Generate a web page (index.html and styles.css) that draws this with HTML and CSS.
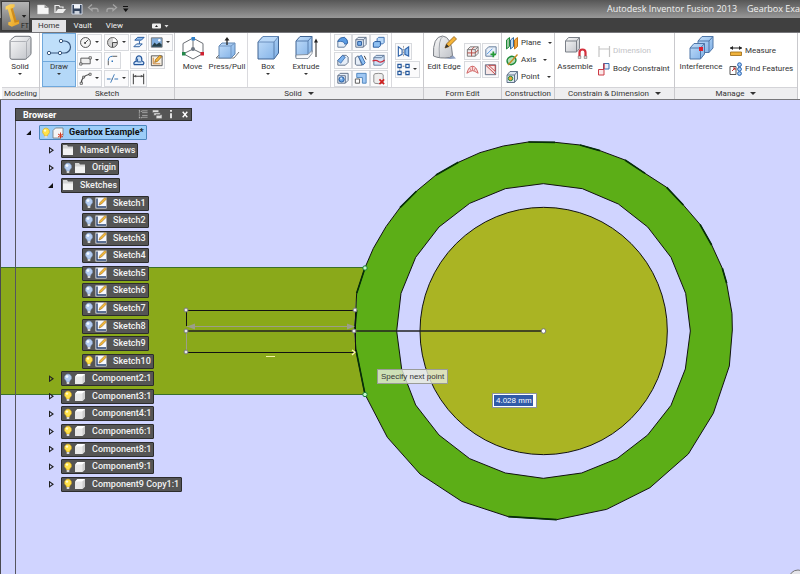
FILE: index.html
```html
<!DOCTYPE html>
<html lang="en">
<head>
<meta charset="utf-8">
<title>Autodesk Inventor Fusion 2013</title>
<link rel="stylesheet" href="styles.css">
</head>
<body>
<svg class="defs" aria-hidden="true">
  <defs>
    <linearGradient id="gBlue" x1="0" y1="0" x2="1" y2="1"><stop offset="0" stop-color="#c3defa"/><stop offset="1" stop-color="#7fb0e6"/></linearGradient>
    <linearGradient id="gGrey" x1="0" y1="0" x2="1" y2="1"><stop offset="0" stop-color="#fafafa"/><stop offset="1" stop-color="#bfc2c8"/></linearGradient>
    <linearGradient id="gGold" x1="0" y1="0" x2="1" y2="1"><stop offset="0" stop-color="#ffd964"/><stop offset="1" stop-color="#e8a020"/></linearGradient>
  </defs>
  <symbol id="bulb-on" viewBox="0 0 10 12"><path d="M5 1a3.600 3.600 0 0 0-2 6.500L3.600 9h2.800L7 7.500A3.600 3.600 0 0 0 5 1z" fill="#ffe24a" stroke="#d8a820" stroke-width=".6"/><circle cx="4" cy="3.600" r="1.200" fill="#fffbd0"/><path d="M3.700 9h2.600v2H3.700z" fill="#d9d9d9"/></symbol>
  <symbol id="bulb-off" viewBox="0 0 10 12"><path d="M5 1a3.600 3.600 0 0 0-2 6.500L3.600 9h2.800L7 7.500A3.600 3.600 0 0 0 5 1z" fill="#b5cdf2" stroke="#8aa5cf" stroke-width=".6"/><circle cx="4" cy="3.600" r="1.400" fill="#f4f9ff"/><path d="M3.700 9h2.600v2H3.700z" fill="#d9d9d9"/></symbol>
  <symbol id="folder" viewBox="0 0 12 12"><path d="M1 1h4l1 1.500h5V11H1z" fill="#d4d4d4"/><path d="M1 4.500h10V11H1z" fill="#f2f2f2"/></symbol>
  <symbol id="body" viewBox="0 0 12 12"><path d="M1 3.500 3.500 1H11v7.500L8.500 11H1z" fill="#e9e9e9"/><path d="M1 3.500 3.500 1H11L8.500 3.500z" fill="#fff"/><path d="M8.500 3.500 11 1v7.500L8.500 11z" fill="#cfcfcf"/></symbol>
  <symbol id="sk" viewBox="0 0 12 12"><path d="M.5 .5h11v11H.5z" fill="#f7f9ff"/><path d="M2 1.500V10h9" fill="none" stroke="#27406e" stroke-width="1.400"/><path d="m4 8 1-2.500L10 .5 11.500 2 6.500 7z" fill="#f5b93a" stroke="#7d5510" stroke-width=".5"/></symbol>
</svg>

<header class="titlebar">
  <button class="app" aria-label="Application menu">
    <svg viewBox="0 0 30 30"><path d="M4 4.500 9 2h5v3l-2 1 4 14 3-.5v4L11 27l-4-2v-3l3-1L6.500 7.500 4 8z" fill="url(#gGold)"/><path d="M9.500 7 12 6l4 14 3-.5v1.500l-5 1.500z" fill="#b56c08" opacity=".6"/><path d="M22 14h5l-2.500 3z" fill="#222"/></svg>
    <span>FT</span>
  </button>
  <nav class="quick" aria-label="Quick access">
    <button aria-label="New"><svg viewBox="0 0 14 12"><path d="M1.500 2h7L12.500 5v6h-11z" fill="#f6f6f6" stroke="#ccc" stroke-width=".5"/><path d="M8.500 2v3h4z" fill="#999"/></svg></button>
    <button aria-label="Open"><svg viewBox="0 0 14 12"><path d="M2 10V2.500h4l1 1.500h3v1.500" fill="none" stroke="#eee" stroke-width="1.200"/><path d="M2 10 5 6h8l-3 4z" fill="#eee"/></svg></button>
    <button aria-label="Save"><svg viewBox="0 0 14 12"><path d="M2 1.500h10V11H2z" fill="#33435c" stroke="#cfd6e3"/><path d="M4 1.500h6v4H4z" fill="#f2f4f8"/><path d="M4.500 8h5v3h-5z" fill="#cdd3dd"/></svg></button>
    <button aria-label="Undo"><svg viewBox="0 0 14 12"><path d="M5 1.500 1.500 4.500 5 7.500V5.500h4q2 0 2 2V9" fill="none" stroke="#a5a5a5" stroke-width="1.300"/></svg></button>
    <button aria-label="Redo"><svg viewBox="0 0 14 12"><path d="m9 1.500 3.500 3L9 7.500V5.500H5q-2 0-2 2V9" fill="none" stroke="#a5a5a5" stroke-width="1.300"/></svg></button>
    <button aria-label="Customize"><svg viewBox="0 0 14 12"><path d="M2 3h5v1H2zM2 5.500h5.500L4.750 9z" fill="#111"/></svg></button>
  </nav>
  <h1><span>Autodesk Inventor Fusion 2013</span><span>Gearbox Exa</span></h1>
</header>

<nav class="tabs" aria-label="Ribbon tabs">
  <button class="current">Home</button>
  <button>Vault</button>
  <button>View</button>
  <button class="min" aria-label="Ribbon display"><svg viewBox="0 0 18 8"><rect x="1" y="1.500" width="9" height="5" rx="1" fill="#eee"/><path d="M4 5h3L5.500 3z" fill="#222"/><path d="M13.500 3h4l-2 2.500z" fill="#ddd"/></svg></button>
</nav>

<section class="ribbon">
  <section class="panel">
    <div class="tools">
      <button class="big w-solid"><svg viewBox="0 0 28 28"><path d="M4 7.500Q4 6 5 5.500L8 3q1-.7 2-.7h13q2 0 2 2v15q0 1-1 2l-3 3q-1 1-2 1H6q-2 0-2-2z" fill="url(#gGrey)" stroke="#70747b"/><path d="M4.500 7.500h15q1 0 1 1v15.500M20.500 8 24 3.500" fill="none" stroke="#a2a5ab" stroke-width=".8"/></svg>Solid<i class="caret"></i></button>
    </div>
    <h2>Modeling</h2>
  </section>

  <section class="panel">
    <div class="tools sketch">
      <button class="big on"><svg viewBox="0 0 28 28"><path d="M4 19h10M17 7h2.500a6 6 0 0 1 0 12H16" fill="none" stroke="#39577c" stroke-width="1.200"/><g fill="#fff" stroke="#39577c"><circle cx="4" cy="19" r="1.700"/><circle cx="15" cy="19" r="1.700"/><circle cx="16" cy="7" r="1.700"/></g></svg>Draw<i class="caret"></i></button>
      <div class="sketch-grid">
        <button class="t dd"><svg viewBox="0 0 16 16"><circle cx="8" cy="8" r="5.300" fill="#f4f4f4" stroke="#4a4a4a"/><path d="m7.500 8.500 3.500-3.500" stroke="#4a4a4a"/><circle cx="7.500" cy="8.500" r="1" fill="#333"/></svg><i class="caret"></i></button>
        <button class="t dd"><svg viewBox="0 0 16 16"><circle cx="8" cy="8" r="5.300" fill="#d4d4d4" stroke="#555"/><path d="M8 8h5M8 8v5" stroke="#444"/><path d="M8.500 3.500a4.500 4.500 0 0 1 4 4h-4z" fill="#fff"/></svg><i class="caret"></i></button>
        <button class="t"><svg viewBox="0 0 16 16"><path d="m4 5.500 3-3h7l-3 3z" fill="#8ebdf0" stroke="#23569b"/><path d="M9 6.500v3M3 12.500l3-3h6l-3 3z" fill="#dcebfb" stroke="#23569b"/></svg></button>
        <button class="t dd"><svg viewBox="0 0 16 16"><path d="M2.500 3h11.500v10H2.500z" fill="#82aede" stroke="#777"/><path d="m3 12 3-4 2 2 3-2 2.500 2v2.500H3z" fill="#253f48"/><circle cx="11" cy="5.500" r="1.300" fill="#fff"/></svg><i class="caret"></i></button>
        <button class="t dd"><svg viewBox="0 0 16 16"><path d="M3 5.500h10v6H3z" fill="#eee" stroke="#555"/><path d="M1.800 10.500h2.400v2.400H1.800zM11.800 4h2.400v2.400h-2.400z" fill="#fff" stroke="#444" stroke-width=".8"/></svg><i class="caret"></i></button>
        <button class="t"><svg viewBox="0 0 16 16"><path d="M3.500 13V8" stroke="#555"/><path d="M3.500 8q0-4.500 4.500-4.500" fill="none" stroke="#2870b9"/><path d="M8 3.500h5" stroke="#555"/><path d="M7 8h1.500v1.500H7z" fill="#2870b9"/></svg></button>
        <button class="t"><svg viewBox="0 0 16 16"><path d="M3.500 12.500q-1.500-3 2-3.500Q5 3 8.500 3t3 5.500q3.500 1 1.500 4z" fill="#cfe3f9" stroke="#23569b" stroke-width="1.300"/><path d="M7 6v3.500h4" fill="none" stroke="#23569b"/></svg></button>
        <button class="t"><svg viewBox="0 0 16 16"><path d="M2.500 3h11.500v10.500H2.500z" fill="#f4efe4" stroke="#555"/><path d="M4.500 5v6.500H12" stroke="#cc8030" fill="none"/><path d="m6 10 1-3 4.500-4.500L13.500 4 9 9z" fill="#f4b63f" stroke="#875510" stroke-width=".7"/></svg></button>
        <button class="t dd"><svg viewBox="0 0 16 16"><path d="M3.500 13Q4 5 12.500 3.500" fill="none" stroke="#444" stroke-width="1.200"/><path d="M2.300 12h2.400v2.200H2.300zM11.800 2.400H14v2.200h-2.200zM5 5.500h2v2H5z" fill="#fff" stroke="#444" stroke-width=".8"/></svg><i class="caret"></i></button>
        <button class="t dd"><svg viewBox="0 0 16 16"><path d="M2 8.500h4M10 8.500h4" stroke="#3776b8" stroke-width="1.200"/><path d="m6 12.500 4-9" stroke="#3776b8"/><path d="M7 8.500h1.500" stroke="#777"/></svg><i class="caret"></i></button>
        <button class="t"><svg viewBox="0 0 16 16"><path d="M2.500 3v11M13.500 3v11M3 5.500h10" stroke="#444" stroke-width="1.100"/><path d="m3 5.500 2.500-1.500v3zM13 5.500l-2.500-1.500v3z" fill="#555"/></svg></button>
      </div>
    </div>
    <h2>Sketch</h2>
  </section>

  <section class="panel">
    <div class="tools">
      <button class="big w-move"><svg viewBox="0 0 28 28"><path d="M14 4 24 9.500v10L14 25 4 19.500v-10zM14 4v11L4 20M14 15l10 5" fill="none" stroke="#6a6e74"/><circle cx="14" cy="15" r="2" fill="#6c7682"/><path d="M12.500 3h3.500v3.500h-3.500z" fill="#2f80ca"/><path d="M3 18h3.500v3.500H3z" fill="#23874a"/><path d="M21.500 18H25v3.500h-3.500z" fill="#cf2030"/></svg>Move</button>
      <button class="big w-press"><svg viewBox="0 0 28 28"><path d="m3 24 3-3M3 24h18l5-6" stroke="#777" fill="none"/><path d="m6 12 3-3h13v11l-4 4H6z" fill="url(#gBlue)" stroke="#6388b4"/><path d="M6 12h12v12M18 12l4-3" fill="none" stroke="#7297c4"/><path d="M14 11V5" stroke="#222" stroke-width="1.300"/><path d="M11.500 6.500 14 3l2.500 3.500z" fill="#222"/></svg>Press/Pull</button>
      <hr>
      <button class="big w-box"><svg viewBox="0 0 28 28"><path d="m4 8 5-5.500h15.500V19L20 25H4z" fill="url(#gBlue)" stroke="#3f6391"/><path d="m4 8 5-5.500h15.500L20 8z" fill="#b9d8f8" stroke="#587eae" stroke-width=".8"/><path d="M20 8v17" stroke="#587eae"/></svg>Box<i class="caret"></i></button>
      <button class="big w-ext"><svg viewBox="0 0 28 28"><path d="m4 7 4-4.500h12V18l-4 5.500H4z" fill="url(#gBlue)" stroke="#3f6391"/><path d="M4 7h12v16M16 7l4-4.500" fill="none" stroke="#587eae"/><path d="m4 21 12-.5 4-4v3l-4 5H4z" fill="#f5f7fa" stroke="#77818e" stroke-width=".8"/><path d="M24 23V7" stroke="#222"/><path d="m22 8.500 2-4 2 4z" fill="#222"/></svg>Extrude<i class="caret"></i></button>
      <hr>
      <div class="grid3">
        <button class="t"><svg viewBox="0 0 16 16"><path d="M3 13V6q2-3.500 7-3.500 3.500 2 3.500 6L10 13z" fill="#e6eef8" stroke="#5f7898"/><path d="M3 7q2-4.500 7-4.500 3.500 2 3.500 6l-3 1.500Q10 6 3 7z" fill="#5a9be2" stroke="#23569b" stroke-width=".7"/></svg></button>
        <button class="t"><svg viewBox="0 0 16 16"><path d="m3 5 2.500-2.500h8.500V10l-3 3H3zM3 5h8v8M11 5l3-2.500" fill="#e6eef8" stroke="#5f6f86"/><path d="M5 7h4v4H5z" fill="#7bb2ee" stroke="#23569b"/></svg></button>
        <button class="t"><svg viewBox="0 0 16 16"><path d="M6.500 4 8 2.500h6V8l-1.500 1.500h-6z" fill="#b8d8f8" stroke="#3d6fb0"/><path d="M2.500 8.500 4 7h6v4.500L8.500 13h-6z" fill="#8fc0f2" stroke="#23569b"/></svg></button>
        <button class="t"><svg viewBox="0 0 16 16"><path d="M3 13V8l5-5.500h4l2 2V10l-3 3z" fill="#e6eef8" stroke="#5f6f86"/><path d="m3 8 5-5.500 3 2L6 11z" fill="#7db3ee" stroke="#23569b" stroke-width=".7"/></svg></button>
        <button class="t"><svg viewBox="0 0 16 16"><path d="M2.500 12V5l3-2 4 10H4z" fill="#e6eef8" stroke="#5f6f86"/><path d="m6 4 3-1.500 4 8L10.500 13z" fill="#8fc0f2" stroke="#3d6fb0"/><path d="m12 3 2 4" stroke="#333"/></svg></button>
        <button class="t"><svg viewBox="0 0 16 16"><path d="m3 5 2.500-2.500h8.500V10l-3 3H3zM3 5h8M11 5l3-2.500" fill="#cfe2f7" stroke="#5f7898"/><path d="M1.500 8.500q4-1.500 6.500.5t6.500-1.500" fill="none" stroke="#d02a3a" stroke-width="1.300"/></svg></button>
        <button class="t"><svg viewBox="0 0 16 16"><path d="m3 5 2.500-2.500h8.500V10l-3 3H3zM3 5h8v8" fill="#e6eef8" stroke="#5f6f86"/><circle cx="7" cy="9" r="2.800" fill="#6aa6e6" stroke="#23569b"/><circle cx="6.500" cy="8" r="1" fill="#d8eafd"/></svg></button>
        <button class="t"><svg viewBox="0 0 16 16"><path d="M4 2.500h10V13h-4V7H4z" fill="#9fc7f3" stroke="#4d84bd"/><path d="M2.500 8.500H7V13H2.500z" fill="#fff" stroke="#555"/></svg></button>
        <button class="t"><svg viewBox="0 0 16 16"><path d="M3 4q0-1.500 5-1.500T13 4v8q0 1.500-5 1.500T3 12z" fill="#eee" stroke="#888"/><path d="m9 9 5 5M14 9l-5 5" stroke="#d02020" stroke-width="1.800"/></svg></button>
      </div>
      <hr>
      <div class="stack">
        <button class="t"><svg viewBox="0 0 16 16"><path d="M2.500 3v10l4-2V6z" fill="#fff" stroke="#2f62a8" stroke-width="1.200"/><path d="M13.500 3v10l-4-2V6z" fill="#8fbdf0" stroke="#2f62a8" stroke-width="1.200"/><path d="M8 2v12" stroke="#999" stroke-dasharray="2 1"/></svg></button>
        <button class="t dd"><svg viewBox="0 0 16 16"><path d="M4 4.500h8M4 11.500h8M4 5v6" stroke="#777" stroke-dasharray="2 1"/><path d="M2 2.500h3.500V6H2zM2 10h3.500v3.500H2zM10.500 10H14v3.500h-3.500zM10.500 2.500H14V6h-3.500z" fill="#eaf3fd" stroke="#23569b" stroke-width="1.200"/></svg><i class="caret"></i></button>
      </div>
    </div>
    <h2>Solid<i class="caret wide"></i></h2>
  </section>

  <section class="panel">
    <div class="tools">
      <button class="big w-edge"><svg viewBox="0 0 28 28"><path d="M8 23 20 25l6-.5-4-4z" fill="#5f78a8" opacity=".7"/><path d="M3.500 22Q2.500 2.500 12.500 2q9 .5 10 19.500l-3 2Q10 25 3.500 22z" fill="url(#gGrey)" stroke="#7b7f86"/><path d="M9.500 23Q8 5 13 2.500" fill="none" stroke="#a2a6ac"/><path d="m15 14 1.500-4L24 2.500l2.500 2.500L19 12.500z" fill="#f5b438" stroke="#8a5a14" stroke-width=".8"/><path d="m15 14 1.500-4 2.500 2.500z" fill="#333"/></svg>Edit Edge</button>
      <div class="grid2">
        <button class="t"><svg viewBox="0 0 16 16"><path d="m2.500 6 3-3H14v7l-3 3H2.500zM2.500 6H11v7M11 6l3-3" fill="#f0eaec" stroke="#777"/><path d="M2.500 9.500H11l3-3M7 13V6l3-3" fill="none" stroke="#b5483f"/></svg></button>
        <button class="t"><svg viewBox="0 0 16 16"><path d="M3 13V6l3-3h8v7l-3 3z" fill="#e6eef8" stroke="#5f7898"/><path d="m4 11 6-6" stroke="#5a9be2"/><path d="M11 8v6M8 11h6" stroke="#229a35" stroke-width="1.800"/></svg></button>
        <button class="t"><svg viewBox="0 0 16 16"><path d="M2 12Q4 4.500 8 4.500T14 12l-3.500-2Q8 8.500 5.500 10z" fill="#f8dada" stroke="#cf6060"/><path d="M8 4.500V9M5 6.500 6.500 9.500M11 6.500l-1.500 3" stroke="#cf6060" stroke-width=".8"/></svg></button>
        <button class="t"><svg viewBox="0 0 16 16"><path d="M2.500 3h11v10.500h-11z" fill="#f8e6e6" stroke="#5f6f86"/><path d="m3 3.500 10.500 10M6 3.500h7v6.500z" fill="none" stroke="#c24040"/></svg></button>
      </div>
    </div>
    <h2>Form Edit</h2>
  </section>

  <section class="panel">
    <div class="tools rows">
      <button class="row"><svg viewBox="0 0 14 14"><path d="m1.500 4 3-2.500v9l-3 2.500z" fill="#9bc7a0" stroke="#1f8a3a"/><path d="m5.500 4 3-2.500v9l-3 2.500z" fill="#bcd9f4" stroke="#33689e"/><path d="m9.500 4 3-2.500v9l-3 2.500z" fill="#f3a53b" stroke="#c0741a"/></svg>Plane<i class="caret"></i></button>
      <button class="row"><svg viewBox="0 0 14 14"><ellipse cx="6.500" cy="7.500" rx="4.500" ry="4" transform="rotate(-30 6.500 7.500)" fill="#b4ddb9" stroke="#1f8a3a" stroke-width="1.500"/><path d="M3 12 12.500 1.500" stroke="#c98a20" stroke-width="1.300"/></svg>Axis<i class="caret"></i></button>
      <button class="row"><svg viewBox="0 0 14 14"><path d="m2 5 3-3.500h7.500V9l-3 3.500H2zM2 5h7.500v7.500M9.500 5l3-3.500" fill="#dce6f0" stroke="#63748c"/><circle cx="5.500" cy="8.500" r="2.200" fill="#f3a53b" stroke="#1f8a3a"/></svg>Point<i class="caret"></i></button>
    </div>
    <h2>Construction</h2>
  </section>

  <section class="panel">
    <div class="tools">
      <button class="big w-asm"><svg viewBox="0 0 28 28"><path d="m4.500 7 3-3.500h11v11l-3 3.500h-11zM4.500 7h11v11M15.500 7l3-3.500" fill="url(#gGrey)" stroke="#7b8088"/><path d="M18.500 24v-5.500a3 3 0 0 1 6 0V24" fill="none" stroke="#d4303c" stroke-width="2.200"/><path d="M17.200 22h2.600v2.500h-2.600zM23.200 22h2.600v2.500h-2.600z" fill="#ddd" stroke="#666" stroke-width=".5"/></svg>Assemble</button>
      <div class="rows two">
        <button class="row off" disabled><svg viewBox="0 0 14 14"><path d="M2 2v11M12.500 2v11M2 5h10.500" stroke="#c4c4c4" stroke-width="1.200"/></svg>Dimension</button>
        <button class="row"><svg viewBox="0 0 14 14"><path d="M6.500 1.500H12V7H6.500z" fill="#e6eefb" stroke="#3d6fb0"/><path d="M1.500 7.500H7V13H1.500z" fill="#fbe8e8" stroke="#cc3a45"/><path d="M7 1.500V7" stroke="#cc2a35" stroke-width="1.300"/></svg>Body Constraint</button>
      </div>
    </div>
    <h2>Constrain &amp; Dimension<i class="caret wide"></i></h2>
  </section>

  <section class="panel">
    <div class="tools">
      <button class="big w-int"><svg viewBox="0 0 28 28"><path d="m11 7 4-4.500h11V14l-4 4.500H11zM11 7h11v11.500M22 7l4-4.500" fill="url(#gBlue)" stroke="#4f76a8"/><path d="m3 14 4-4.500h10.500V20l-4 5H3zM3 14h10.500v11M13.500 14l4-4.500" fill="url(#gBlue)" stroke="#4f76a8"/><path d="M12 13h4v4h-4z" fill="#e01f2d"/></svg>Interference</button>
      <div class="rows two">
        <button class="row"><svg viewBox="0 0 14 14"><path d="M1 4h12" stroke="#222"/><path d="M1 4l3-2v4zM13 4l-3-2v4z" fill="#222"/><path d="M1.500 8h11v3.500h-11z" fill="#efb23c" stroke="#9a6710" stroke-width=".8"/></svg>Measure</button>
        <button class="row"><svg viewBox="0 0 14 14"><path d="M1 4.500h6v8H1z" fill="#fff" stroke="#555"/><path d="m3 9 3-3M4 6h2v2" stroke="#c22d2d" fill="none"/><g fill="#a9cff7" stroke="#235fae"><circle cx="10.500" cy="2.700" r="1.900"/><circle cx="10.500" cy="7.200" r="1.900"/><circle cx="10.500" cy="11.500" r="1.900"/></g></svg>Find Features</button>
      </div>
    </div>
    <h2>Manage<i class="caret wide"></i></h2>
  </section>
</section>

<main class="canvas">
  <svg class="drawing" viewBox="0 100 800 474" preserveAspectRatio="xMinYMin slice">
    <path d="M0 268H366L356 300 354 331 356 352 365 394H0z" fill="#8aa91a"/>
    <path d="M0 267.500H366M0 394.500H365" stroke="#39702a"/>
    <g transform="translate(350 130) scale(.33333)" stroke="#111" stroke-width="3" stroke-linejoin="round">
      <path fill="#5cae17" fill-rule="evenodd" d="M535 36 615 37 690 45 750 62 825 90 885 130 950 172 1000 225 1050 283 1085 345 1117 415 1130 460 1146 550 1147 600 1138 708 1090 850 1015 972 900 1073 770 1138 620 1169 475 1160 335 1114 210 1032 112 922 45 793 18 660 14 605 20 490 45 413 70 355 108 290 150 233 200 183 258 135 325 97 390 68 460 48zM580 161 697 176 805 222 893 291 963 382 1007 490 1021 603 1006 717 963 826 893 915 801 986 695 1029 580 1045 466 1029 359 986 267 915 197 825 155 717 140 603 153 490 197 382 267 291 359 220 466 176z"/>
      <circle cx="581" cy="603" r="371" fill="#aab423"/>
      <path d="M45 413 20 490 M18 660 45 793 M20 540 14 600 M325 97 258 135 M200 183 150 233 M690 45 750 62 M825 90 885 130 M950 172 1000 225 M1050 283 1085 345 M1117 415 1130 460 M535 36 615 37 M475 1160 620 1169" fill="none" stroke="#062f08" stroke-width="5"/>
    </g>
    <path d="M186 310.500H355M186 352.500H355M186.500 310v16" stroke="#111" fill="none"/>
    <path d="M355.500 310V352" stroke="#111"/>
    <path d="M186 331H543" stroke="#222" stroke-width="1.300"/>
    <path d="M186.500 331v20M187 326.500H354" stroke="#9c9e8a"/>
    <path d="m187 326.500 8-3v6zM355 326.500l-8-3v6z" fill="#9c9e8a"/>
    <path d="M266 356.500h9" stroke="#f2f3a0"/>
    <g fill="#e9e9e9" stroke="#777"><circle cx="186" cy="310" r="2"/><circle cx="186" cy="331" r="2"/><circle cx="186" cy="352" r="2"/><circle cx="355" cy="310" r="2"/><circle cx="354" cy="331" r="2"/><circle cx="543.500" cy="331" r="2.300" fill="#fff"/></g>
    <path d="m352 350 3 2-3 3" fill="none" stroke="#fff3b0" stroke-width="1.300"/>
    <g fill="#c9f5c9" stroke="#158035"><circle cx="365" cy="268" r="2.200"/><circle cx="365" cy="394.500" r="2.200"/></g>
    <path d="M15.500 121V574" stroke="#55555f"/>
    <circle cx="798" cy="579" r="9" fill="#e5e5ea" stroke="#777"/>
  </svg>

  <section class="browser">
    <header>
      <h2>Browser</h2>
      <button aria-label="Filter"><svg viewBox="0 0 12 12"><path d="M2 1v10M2 2.500h3M2 9.500h3" stroke="#ccc" stroke-dasharray="1 1"/><path d="M5 2h6M5 4h6M5 7h6M5 9h6" stroke="#aaa"/></svg></button>
      <button aria-label="Collapse all"><svg viewBox="0 0 12 12"><path d="M1 1h7v3H1zM2.500 4h7v3h-7zM5 6h6.500v4.500H5z" fill="#ddd" stroke="#555" stroke-width=".7"/></svg></button>
      <button aria-label="Options"><svg viewBox="0 0 12 12"><path d="M5 1h2v2H5zM5 4.500h2V10H5z" fill="#eee"/></svg></button>
      <button aria-label="Close"><svg viewBox="0 0 12 12"><path d="m3.500 3 5 6M8.500 3l-5 6" stroke="#fff" stroke-width="1.500"/></svg></button>
    </header>
    <ul class="tree">
      <li class="l0"><i class="open"></i><button class="node sel"><svg><use href="#bulb-on"/></svg><svg viewBox="0 0 12 12"><path d="M1 3.500 3.500 1H11v7.500L8.500 11H1z" fill="#f5f5f5" stroke="#777" stroke-width=".8"/><path d="M8.500 5.500v6M6 7l5 3M11 7l-5 3" stroke="#d13a22"/></svg><span>Gearbox Example*</span></button></li>
      <li class="l1"><i class="shut"></i><button class="node"><svg><use href="#folder"/></svg><span>Named Views</span></button></li>
      <li class="l1"><i class="shut"></i><button class="node"><svg><use href="#bulb-off"/></svg><svg><use href="#folder"/></svg><span>Origin</span></button></li>
      <li class="l1"><i class="open"></i><button class="node"><svg><use href="#folder"/></svg><span>Sketches</span></button></li>
      <li class="l2"><button class="node"><svg><use href="#bulb-off"/></svg><svg><use href="#sk"/></svg><span>Sketch1</span></button></li>
      <li class="l2"><button class="node"><svg><use href="#bulb-off"/></svg><svg><use href="#sk"/></svg><span>Sketch2</span></button></li>
      <li class="l2"><button class="node"><svg><use href="#bulb-off"/></svg><svg><use href="#sk"/></svg><span>Sketch3</span></button></li>
      <li class="l2"><button class="node"><svg><use href="#bulb-off"/></svg><svg><use href="#sk"/></svg><span>Sketch4</span></button></li>
      <li class="l2"><button class="node"><svg><use href="#bulb-off"/></svg><svg><use href="#sk"/></svg><span>Sketch5</span></button></li>
      <li class="l2"><button class="node"><svg><use href="#bulb-off"/></svg><svg><use href="#sk"/></svg><span>Sketch6</span></button></li>
      <li class="l2"><button class="node"><svg><use href="#bulb-off"/></svg><svg><use href="#sk"/></svg><span>Sketch7</span></button></li>
      <li class="l2"><button class="node"><svg><use href="#bulb-off"/></svg><svg><use href="#sk"/></svg><span>Sketch8</span></button></li>
      <li class="l2"><button class="node"><svg><use href="#bulb-off"/></svg><svg><use href="#sk"/></svg><span>Sketch9</span></button></li>
      <li class="l2"><button class="node"><svg><use href="#bulb-on"/></svg><svg><use href="#sk"/></svg><span>Sketch10</span></button></li>
      <li class="l1"><i class="shut"></i><button class="node"><svg><use href="#bulb-off"/></svg><svg><use href="#body"/></svg><span>Component2:1</span></button></li>
      <li class="l1"><i class="shut"></i><button class="node"><svg><use href="#bulb-on"/></svg><svg><use href="#body"/></svg><span>Component3:1</span></button></li>
      <li class="l1"><i class="shut"></i><button class="node"><svg><use href="#bulb-on"/></svg><svg><use href="#body"/></svg><span>Component4:1</span></button></li>
      <li class="l1"><i class="shut"></i><button class="node"><svg><use href="#bulb-on"/></svg><svg><use href="#body"/></svg><span>Component6:1</span></button></li>
      <li class="l1"><i class="shut"></i><button class="node"><svg><use href="#bulb-on"/></svg><svg><use href="#body"/></svg><span>Component8:1</span></button></li>
      <li class="l1"><i class="shut"></i><button class="node"><svg><use href="#bulb-on"/></svg><svg><use href="#body"/></svg><span>Component9:1</span></button></li>
      <li class="l1"><i class="shut"></i><button class="node"><svg><use href="#bulb-on"/></svg><svg><use href="#body"/></svg><span>Component9 Copy1:1</span></button></li>
    </ul>
  </section>

  <label class="hint" for="length">Specify next point</label>
  <input class="length" id="length" type="text" value="4.028 mm">
</main>
</body>
</html>
```

FILE: styles.css
```css
* { box-sizing: border-box; }

body {
  margin: 0;
  min-height: 100vh;
  display: flex;
  flex-direction: column;
  overflow: hidden;
  background: #d0d4ff;
  font-family: Roboto, "Liberation Sans", sans-serif;
  font-size: 8px;
  line-height: 10px;
  color: #333;
}

button {
  margin: 0;
  padding: 0;
  border: 0;
  background: none;
  font: inherit;
  color: inherit;
}

svg { display: block; }
.defs { position: absolute; width: 0; height: 0; }
h1, h2 { margin: 0; font-weight: 400; }

/* Title bar */
.titlebar {
  position: relative;
  display: flex;
  align-items: center;
  height: 18px;
  padding-left: 36px;
  background: linear-gradient(#565656, #989898);
}

.app {
  position: absolute;
  left: 1px;
  top: 1px;
  z-index: 1;
  width: 29px;
  height: 30px;
  border: 1px solid #3a3a3a;
  background: linear-gradient(#b4b4b4, #6c6c6c);
}
.app svg { width: 27px; height: 28px; }
.app span { position: absolute; right: 0; bottom: -1px; font-size: 7px; color: #222; }

.quick { display: flex; gap: 3px; }
.quick svg { width: 14px; height: 12px; }

.titlebar h1 {
  display: flex;
  justify-content: flex-end;
  gap: 10px;
  margin-left: auto;
  white-space: nowrap;
  font: 9px/16px "Open Sans", sans-serif;
  color: #f2f2f2;
}

/* Tabs */
.tabs {
  display: flex;
  height: 14px;
  padding: 2px 0 0 32px;
  gap: 2px;
  background: #404040;
}
.tabs button { padding: 0 6px; line-height: 12px; color: #f0f0f0; }
.tabs .current { background: #e3e3e5; color: #333; }
.tabs .min svg { width: 18px; height: 8px; margin-left: 14px; }

/* Ribbon */
.ribbon {
  display: grid;
  grid-template-columns: 38px 135px 249px 78px 53px 120px 1fr;
  height: 68px;
  padding: 0 2px;
  border-top: 1px solid #77777b;
  border-bottom: 1px solid #77777b;
  background: #fff;
}
.panel {
  display: flex;
  flex-direction: column;
  border-right: 1px solid #c9c9cd;
  white-space: nowrap;
}
.panel h2 {
  display: flex;
  align-items: center;
  justify-content: center;
  height: 12px;
  border-top: 1px solid #d4d4d8;
  background: #eeeef0;
  font-size: 8px;
}
.tools { display: flex; flex: 1; align-items: center; }

.caret {
  width: 0;
  height: 0;
  border: 2px solid transparent;
  border-top-color: #333;
  border-bottom: 0;
}
.caret.wide { margin-left: 6px; border-width: 3px 3px 0; }

.big {
  display: flex;
  flex-direction: column;
  align-items: center;
  align-self: stretch;
  flex-shrink: 0;
  padding-top: 1px;
}
.big svg { width: 28px; height: 28px; }
.big .caret { margin-top: 1px; }
.w-solid { width: 36px; }
.w-move { width: 35px; }
.w-press, .w-box { width: 34px; }
.w-ext { width: 42px; }
.w-edge, .w-asm { width: 40px; }
.w-int { width: 52px; }

.on {
  width: 34px;
  margin-left: 2px;
  padding-top: 0;
  border: 1px solid #6fa8dc;
  background: linear-gradient(#bfdffa 27px, #6fa8dc 27px, #6fa8dc 28px, #b4d8f8 28px);
}

.sketch-grid {
  display: grid;
  grid-template-columns: 27px 26px 18px 25px;
  gap: 1px 0;
  justify-items: start;
  margin-left: 1px;
}
.t {
  display: flex;
  align-items: center;
  height: 17px;
  border: 1px solid #d8dade;
  background: #fbfbfc;
}
.t svg { width: 15px; height: 15px; }
.t .caret { margin: 0 2px; }

.tools hr {
  width: 1px;
  height: 54px;
  margin: 0 3px;
  border: 0;
  background: #dadade;
}
.grid3 { display: grid; grid-template-columns: repeat(3, 18px); gap: 1px 0; }
.grid2 { display: grid; grid-template-columns: 17px 17px; gap: 1px; }
.stack { display: grid; gap: 1px; justify-items: start; }

.rows { display: flex; flex-direction: column; align-items: flex-start; justify-content: space-evenly; }
.tools.rows { padding-left: 3px; }
.two { gap: 4px; padding-left: 2px; }
.row { display: flex; align-items: center; gap: 2px; }
.row svg { width: 14px; height: 14px; }
.row .caret { margin-left: 5px; }
.off { color: #c2c2c6; }

/* Modelling canvas */
.canvas {
  position: relative;
  flex: 1;
  box-shadow: inset 1px 0 #4a4a50;
}
.drawing { position: absolute; inset: 0; z-index: -1; width: 100%; height: 100%; }

.browser {
  position: relative;
  width: 177px;
  margin: 8px 0 0 15px;
  font-size: 9px;
  font-weight: 500;
}
.browser header {
  display: flex;
  align-items: center;
  height: 13px;
  padding: 0 0 0 7px;
  border: 1px solid #2e2e2e;
  background: #555;
  color: #fff;
}
.browser h2 { flex: 1; font-size: 9px; font-weight: 700; }
.browser header svg { width: 12px; height: 11px; }
.browser header button { margin-left: 2px; }

.tree {
  display: grid;
  grid-template-rows: repeat(21, 1fr);
  height: 369px;
  margin: 3px 0 0;
  padding: 0;
  list-style: none;
}
.tree li { display: flex; align-items: center; }
.l0 { padding-left: 11px; }
.l1 { padding-left: 33px; }
.l2 { padding-left: 67px; }
.tree i { width: 6px; margin-right: 7px; }
.open::before, .shut::before { content: ""; display: block; }
.open::before { width: 5px; height: 5px; background: #111; clip-path: polygon(100% 0, 100% 100%, 0 100%); }
.shut::before { width: 5px; height: 7px; margin-left: 1px; background: #222; clip-path: polygon(0 0, 100% 50%, 0 100%, 0 0, 1px 2px, 1px 5px, 3px 50%, 1px 2px); }

.node {
  display: flex;
  align-items: center;
  height: 15px;
  padding: 0 2px 0 0;
  border: 1px solid #2c2c2c;
  border-radius: 1px;
  background: #555;
  color: #f2f2f2;
  line-height: 13px;
  white-space: nowrap;
}
.node svg { width: 12px; height: 12px; }
.node span { margin-left: 6px; }
.sel { background: #9ccdf8; border-color: #4c86bd; color: #111; font-weight: 700; }
.sel span { margin-left: 5px; }

.hint {
  position: absolute;
  left: 377px;
  top: 269px;
  padding: 0 3px;
  border: 1px solid #9a9c98;
  background: rgba(232, 236, 222, .8);
  font-family: "Liberation Sans", sans-serif;
  line-height: 13px;
  color: #333;
}
.length {
  position: absolute;
  left: 492px;
  top: 293px;
  width: 45px;
  height: 15px;
  padding: 1px 3px 1px 1px;
  border: 1px solid #8b93a0;
  outline: 0;
  background: linear-gradient(#315ba8, #315ba8) content-box, #fff;
  font: 8px/11px "Liberation Sans", sans-serif;
  color: #fff;
  text-indent: 2px;
}
```
